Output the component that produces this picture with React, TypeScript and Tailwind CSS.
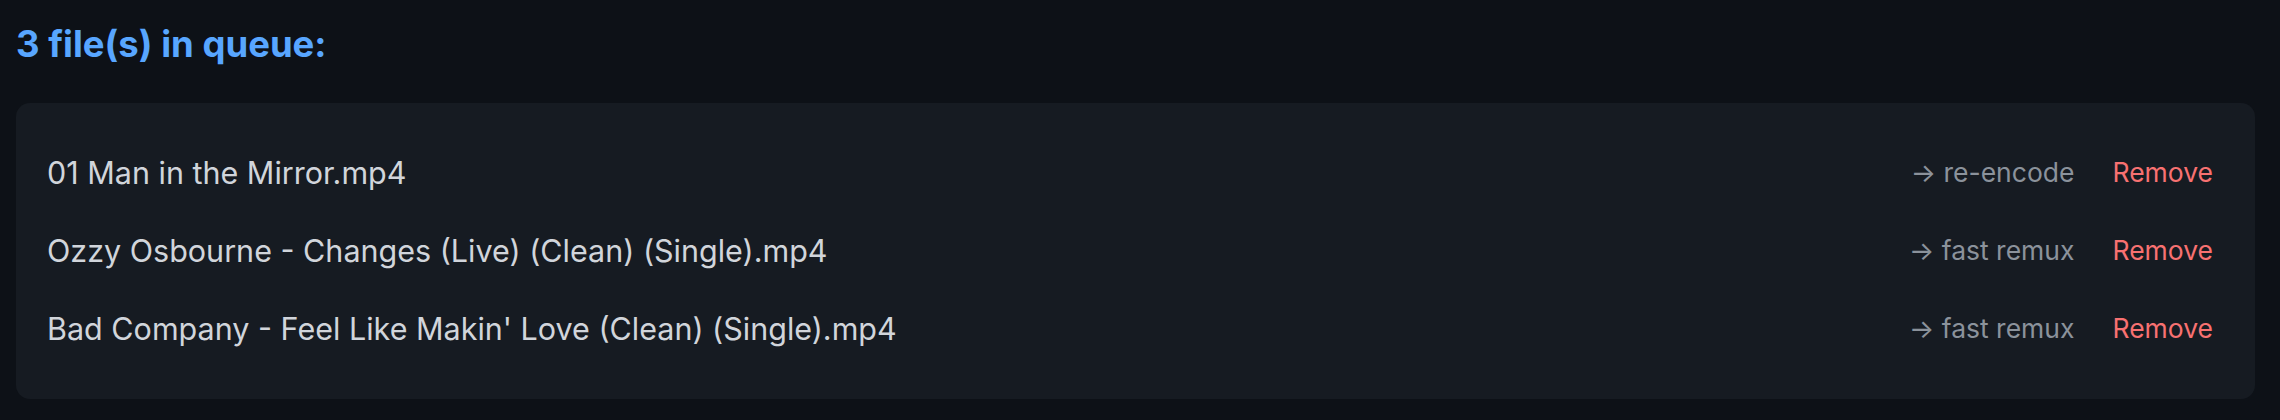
import React from 'react'

type QueueItem = {
  name: string
  mode: string
}

const queue: QueueItem[] = [
  { name: '01 Man in the Mirror.mp4', mode: 're-encode' },
  { name: 'Ozzy Osbourne - Changes (Live) (Clean) (Single).mp4', mode: 'fast remux' },
  { name: "Bad Company - Feel Like Makin' Love (Clean) (Single).mp4", mode: 'fast remux' },
]

function QueueRow({ item }: { item: QueueItem }) {
  return (
    <li className="flex items-center justify-between h-[78px]">
      <span className="text-[30.5px] text-[#d1d5db]">{item.name}</span>
      <div className="flex items-center gap-[38px] text-[26.5px]">
        <span className="text-[#8b929b]">→ {item.mode}</span>
        <button className="text-[#f87171]">Remove</button>
      </div>
    </li>
  )
}

export default function App() {
  return (
    <div
      className="min-h-[420px] w-full bg-[#0d1117] pl-4 pr-[25px] pt-[22px]"
      style={{ fontFamily: 'Inter, "Noto Sans", sans-serif' }}
    >
      <h2 className="text-[36.5px] font-bold leading-[44px] text-[#58a6ff]">
        {queue.length} file(s) in queue:
      </h2>

      {/* queued files */}
      <ul className="mt-[37px] rounded-[14px] bg-[#161b22] pl-[31px] pr-[42px] py-[31px]">
        {queue.map((item) => (
          <QueueRow key={item.name} item={item} />
        ))}
      </ul>
    </div>
  )
}
